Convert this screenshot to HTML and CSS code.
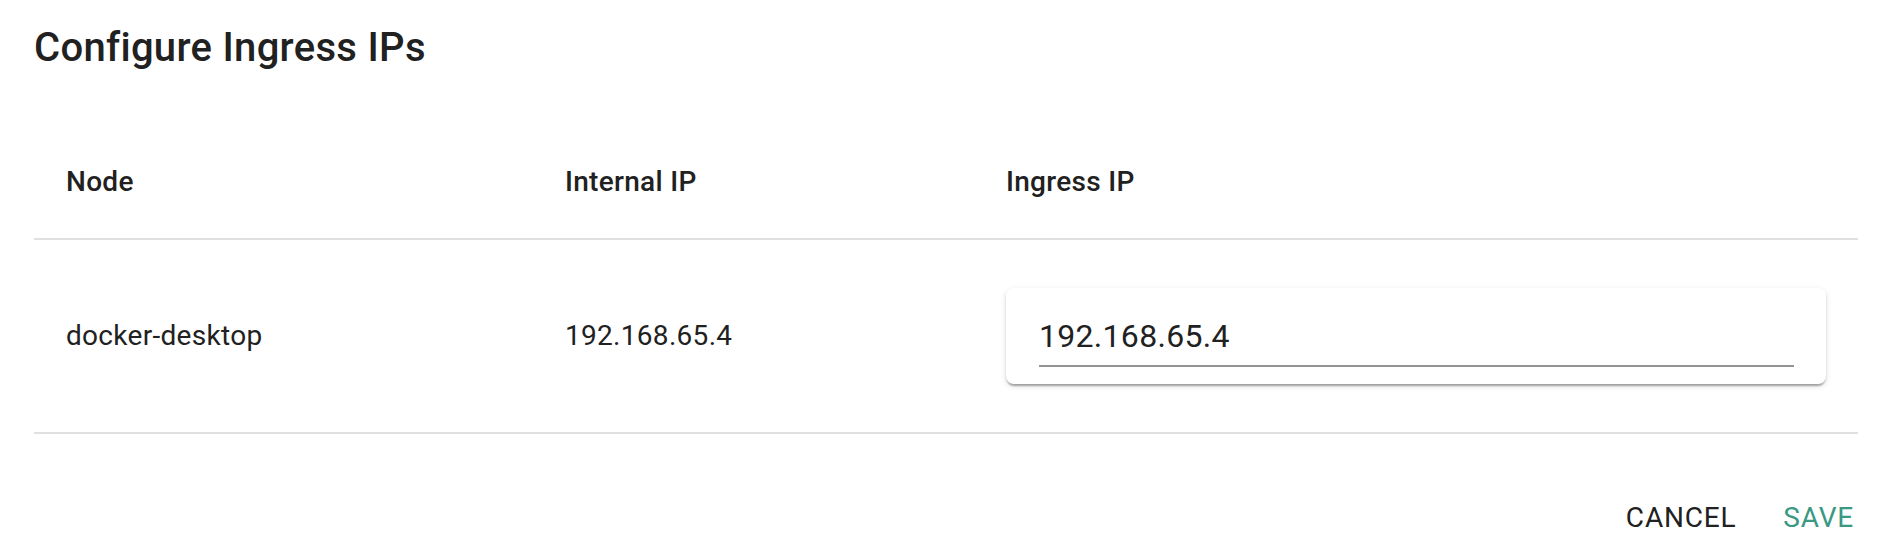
FILE: index.html
```html
<!DOCTYPE html>
<html lang="en">
<head>
<meta charset="utf-8">
<title>Configure Ingress IPs</title>
<link rel="stylesheet" href="styles.css">
</head>
<body>
<div class="dialog">
  <h2 class="title">Configure Ingress IPs</h2>
  <div class="table">
    <div class="row head">
      <div class="cell">Node</div>
      <div class="cell">Internal IP</div>
      <div class="cell">Ingress IP</div>
    </div>
    <div class="row body">
      <div class="cell">docker-desktop</div>
      <div class="cell">192.168.65.4</div>
      <div class="cell input-cell">
        <div class="paper">
          <div class="input">192.168.65.4</div>
        </div>
      </div>
    </div>
  </div>
  <div class="actions">
    <button class="btn">Cancel</button>
    <button class="btn primary">Save</button>
  </div>
</div>
</body>
</html>
```
FILE: styles.css
```css
html, body {
  margin: 0;
  padding: 0;
  background: #ffffff;
}

body {
  font-family: Roboto, "Liberation Sans", sans-serif;
  color: #212121;
}

.dialog {
  padding: 16px 30px 0 34px;
}

.title {
  margin: 0;
  font-size: 40px;
  font-weight: 500;
  line-height: 64px;
  letter-spacing: 0.3px;
  color: #212121;
}

.table {
  margin-top: 46px;
}

.row {
  display: grid;
  grid-template-columns: 499px 441px 1fr;
  border-bottom: 2px solid #e0e0e0;
}

.cell {
  padding: 0 32px;
  font-size: 28px;
  line-height: 48px;
  letter-spacing: 0.3px;
}

.head .cell {
  padding: 32px;
  font-weight: 500;
}

.body {
  align-items: center;
}

.body .cell {
  font-weight: 400;
}

.body .input-cell {
  padding: 48px 32px;
}

.paper {
  background: #ffffff;
  border-radius: 8px;
  box-shadow: 0 4px 2px -2px rgba(0, 0, 0, 0.2),
              0 2px 2px 0 rgba(0, 0, 0, 0.14),
              0 2px 6px 0 rgba(0, 0, 0, 0.12);
  padding: 29px 32px 17px 33px;
}

.input {
  font-size: 32px;
  line-height: normal;
  letter-spacing: 0.3px;
  padding-bottom: 10px;
  border-bottom: 2px solid rgba(0, 0, 0, 0.42);
  color: #212121;
}

.actions {
  display: flex;
  justify-content: flex-end;
  gap: 15px;
  padding: 47px 0 0 0;
  margin-right: -12px;
}

.btn {
  background: none;
  border: 0;
  padding: 12px 16px;
  margin: 0;
  font-family: Roboto, "Liberation Sans", sans-serif;
  font-size: 28px;
  font-weight: 400;
  line-height: 49px;
  letter-spacing: 0.8px;
  text-transform: uppercase;
  color: #212121;
  cursor: pointer;
}

.btn.primary {
  color: #3a9883;
}
```
